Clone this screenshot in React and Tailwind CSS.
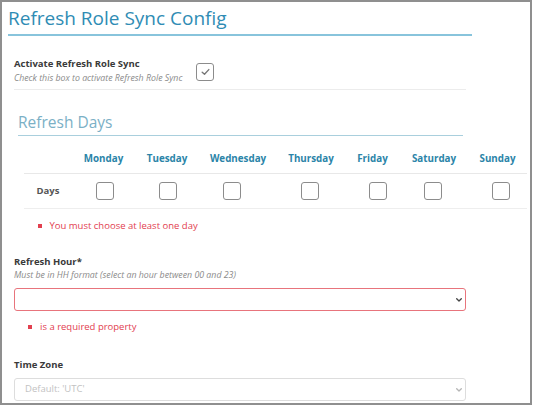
import React from 'react'

const DAYS = [
  { name: 'Monday', w: 'w-[63px]' },
  { name: 'Tuesday', w: 'w-[64px]' },
  { name: 'Wednesday', w: 'w-[78px]' },
  { name: 'Thursday', w: 'w-[68px]' },
  { name: 'Friday', w: 'w-[55px]' },
  { name: 'Saturday', w: 'w-[68px]' },
  { name: 'Sunday', w: 'w-[59px]' },
]

function Checkbox({ checked }) {
  return (
    <span className="flex h-[18px] w-[18px] shrink-0 items-center justify-center rounded-[3px] border-[1.5px] border-[#8c8c8c] bg-white">
      {checked && (
        <svg width="9" height="8" viewBox="0 0 9 8" fill="none">
          <path d="M1.2 4.3 L3.5 6.3 L7.8 1.6" stroke="#777777" strokeWidth="1.4" strokeLinecap="round" strokeLinejoin="round" />
        </svg>
      )}
    </span>
  )
}

function Chevron({ color }) {
  return (
    <svg width="6" height="4" viewBox="0 0 6 4" fill="none">
      <path d="M0.7 0.7 L3 3 L5.3 0.7" stroke={color} strokeWidth="1.3" strokeLinecap="round" strokeLinejoin="round" />
    </svg>
  )
}

function ErrorItem({ text, indent }) {
  return (
    <div className={`flex items-center ${indent} text-[9.5px] leading-[14px] text-[#e2404f]`}>
      <span className="mr-[8px] h-[4px] w-[4px] bg-[#e2404f]" />
      <span>{text}</span>
    </div>
  )
}

export default function App() {
  return (
    <div className="h-[407px] w-[533px] bg-white font-['Open_Sans',sans-serif]">
      <div className="h-[405px] w-[532px] border-2 border-[#8f8f8f]">

        {/* Page title */}
        <div className="ml-[6px] mt-[3px] w-[464px] border-b-2 border-[#88c4dc] pb-[3px]">
          <h1 className="text-[19px] leading-[26px] text-[#2f8cb4]">Refresh Role Sync Config</h1>
        </div>

        {/* Activate toggle */}
        <div className="ml-[12px] mt-[21px] flex w-[452px] items-center border-b border-[#ececec] pb-[5px]">
          <div className="w-[182px]">
            <div className="text-[9.5px] font-bold leading-[14px] text-[#3a3a3a]">Activate Refresh Role Sync</div>
            <div className="mt-[2px] whitespace-nowrap text-[8.8px] italic leading-[11px] text-[#8a8a8a]">
              Check this box to activate Refresh Role Sync
            </div>
          </div>
          <span className="mt-[3px]">
            <Checkbox checked />
          </span>
        </div>

        {/* Refresh days */}
        <div className="ml-[16px] mt-[22px] w-[445px] border-b border-[#a9cfdd] pb-[3px]">
          <h2 className="text-[15.5px] leading-[20px] text-[#7bb0c6]">Refresh Days</h2>
        </div>

        <div className="ml-[22px] mt-[10px] w-[503px]">
          <div className="flex border-b border-[#e8e8e8]">
            <div className="h-[27px] w-[48px]" />
            {DAYS.map((d) => (
              <div key={d.name} className={`flex h-[27px] ${d.w} items-center justify-center text-[9.8px] font-bold text-[#2b84a8]`}>
                {d.name}
              </div>
            ))}
          </div>
          <div className="flex border-b border-[#eeeeee]">
            <div className="flex h-[34px] w-[48px] items-center pl-[12.5px] text-[9.5px] font-bold text-[#555555]">Days</div>
            {DAYS.map((d) => (
              <div key={d.name} className={`flex h-[34px] ${d.w} items-center pl-[24px]`}>
                <Checkbox />
              </div>
            ))}
          </div>
        </div>

        <div className="mt-[10px]">
          <ErrorItem text="You must choose at least one day" indent="ml-[35.5px]" />
        </div>

        {/* Refresh hour */}
        <div className="ml-[12px] mt-[22px] w-[452px]">
          <div className="text-[9.5px] font-bold leading-[14px] text-[#3a3a3a]">Refresh Hour*</div>
          <div className="mt-[1px] text-[8.8px] italic leading-[11px] text-[#8a8a8a]">
            Must be in HH format (select an hour between 00 and 23)
          </div>
          <div className="mt-[7px] flex h-[23px] items-center justify-end rounded-[3px] border border-[#e8747c] bg-white pr-[3px]">
            <Chevron color="#444444" />
          </div>

          <div className="mt-[9px]">
            <ErrorItem text="is a required property" indent="ml-[14px]" />
          </div>

          {/* Time zone */}
          <div className="mt-[24px] text-[9.5px] font-bold leading-[14px] text-[#3a3a3a]">Time Zone</div>
          <div className="mt-[6px] flex h-[23px] items-center justify-between rounded-[3px] border border-[#dddddd] bg-white pl-[10px] pr-[3px]">
            <span className="text-[9.5px] text-[#c2c2c2]">Default: 'UTC'</span>
            <Chevron color="#b5b5b5" />
          </div>
        </div>

      </div>
    </div>
  )
}
